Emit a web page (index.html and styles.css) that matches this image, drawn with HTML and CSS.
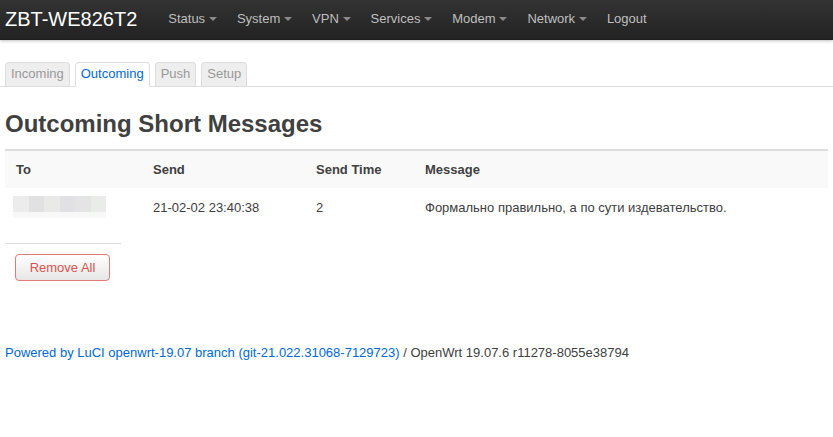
FILE: index.html
```html
<!DOCTYPE html>
<html>
<head>
<meta charset="utf-8">
<link rel="stylesheet" href="styles.css">
</head>
<body>
<header class="topbar">
  <a class="brand" href="#">ZBT-WE826T2</a>
  <ul class="nav">
    <li class="drop">Status</li>
    <li class="drop">System</li>
    <li class="drop">VPN</li>
    <li class="drop">Services</li>
    <li class="drop">Modem</li>
    <li class="drop">Network</li>
    <li>Logout</li>
  </ul>
</header>
<main class="main">
  <ul class="tabs">
    <li class="tab">Incoming</li>
    <li class="tab active">Outcoming</li>
    <li class="tab">Push</li>
    <li class="tab">Setup</li>
  </ul>
  <h2 class="title">Outcoming Short Messages</h2>
  <table class="sms">
    <thead>
      <tr><th class="c1">To</th><th class="c2">Send</th><th class="c3">Send Time</th><th>Message</th></tr>
    </thead>
    <tbody>
      <tr>
        <td class="blurcell"><div class="blur"><span class="b1"></span><span class="b2"></span><span class="b3"></span><span class="b4"></span><span class="b5"></span><span class="b6"></span></div></td>
        <td>21-02-02 23:40:38</td>
        <td>2</td>
        <td>Формально правильно, а по сути издевательство.</td>
      </tr>
    </tbody>
  </table>
  <div class="sep"></div>
  <button class="btn-remove">Remove All</button>
  <footer class="footer"><a href="#">Powered by LuCI openwrt-19.07 branch (git-21.022.31068-7129723)</a> / OpenWrt 19.07.6 r11278-8055e38794</footer>
</main>
</body>
</html>
```
FILE: styles.css
```css
* { box-sizing: border-box; }
body {
  margin: 0;
  font-family: "Liberation Sans", Arial, sans-serif;
  font-size: 13px;
  line-height: 18px;
  color: #404040;
  background: #fff;
}
.topbar {
  height: 40px;
  background: linear-gradient(to bottom, #333333, #222222);
  box-shadow: 0 1px 3px rgba(0,0,0,0.25), inset 0 -1px 0 rgba(0,0,0,0.1);
  display: flex;
  align-items: center;
}
.brand {
  color: #fff;
  font-size: 20px;
  line-height: 40px;
  padding: 0 0 0 5px;
  text-decoration: none;
  margin-right: 21px;
  position: relative;
  top: -1px;
}
.nav {
  list-style: none;
  margin: 0;
  padding: 0;
  display: flex;
}
.nav li {
  color: #bfbfbf;
  padding: 0 10px;
  line-height: 40px;
  position: relative;
  top: -1px;
}
.nav li.drop::after {
  content: "";
  display: inline-block;
  width: 0;
  height: 0;
  border-left: 4px solid transparent;
  border-right: 4px solid transparent;
  border-top: 4px solid #8a8a8a;
  margin-left: 3.8px;
  vertical-align: middle;
  position: relative;
  top: -1px;
}
.main {
  padding: 0 5px;
}
.tabs {
  list-style: none;
  margin: 21px -5px 0;
  padding: 0 5px;
  display: flex;
  gap: 5px;
  border-bottom: 1px solid #ddd;
}
.tab {
  height: 24px;
  line-height: 22px;
  padding: 0 5px;
  background: #eee;
  color: #999;
  border: 1px solid #ddd;
  border-bottom: none;
  border-radius: 4px 4px 0 0;
  position: relative;
  top: 1px;
}
.tab.active {
  background: #fff;
  color: #0069d6;
  height: 25px;
  border-bottom: 1px solid #fff;
}
.title {
  font-size: 24px;
  font-weight: bold;
  line-height: 36px;
  margin: 19px 0 7px;
  color: #404040;
}
.sms {
  width: 100%;
  border-collapse: collapse;
  border-top: 2px solid #ddd;
}
.sms th, .sms td {
  text-align: left;
  padding: 10px 10px 9px 11px;
  line-height: 18px;
  vertical-align: middle;
}
.sms thead tr { background: #f9f9f9; }
.sms th { font-weight: bold; }
.c1 { width: 137px; }
.c2 { width: 163px; }
.c3 { width: 109px; }
.sms td { padding-top: 11px; padding-bottom: 11px; }
.sms td.blurcell { padding: 8px 0 0 8px; vertical-align: top; }
.blur {
  display: flex;
  width: 93px;
  height: 22px;
}
.blur span {
  flex: 1;
  background: linear-gradient(to bottom, var(--c) 0, var(--c) 16px, #f7f7f7 16px, #f9f9f9 22px);
}
.b1 { --c: #ececec; }
.b2 { --c: #e1e1e1; }
.b3 { --c: #e9e9e7; }
.b4 { --c: #e1e1e3; }
.b5 { --c: #e4e4e4; }
.b6 { --c: #eaecea; }
.sep {
  width: 116px;
  border-top: 1px solid #ddd;
  margin-top: 15px;
}
.btn-remove {
  margin: 10px 0 0 10px;
  width: 95px;
  height: 27px;
  font-family: "Liberation Sans", Arial, sans-serif;
  font-size: 13px;
  color: #d9534f;
  background: linear-gradient(to bottom, #ffffff, #e6e6e6);
  border: 1px solid #e37a78;
  border-radius: 4px;
  padding: 0;
  display: block;
}
.footer {
  margin-top: 63px;
  line-height: 18px;
}
.footer a {
  color: #0069d6;
  text-decoration: none;
}
```
